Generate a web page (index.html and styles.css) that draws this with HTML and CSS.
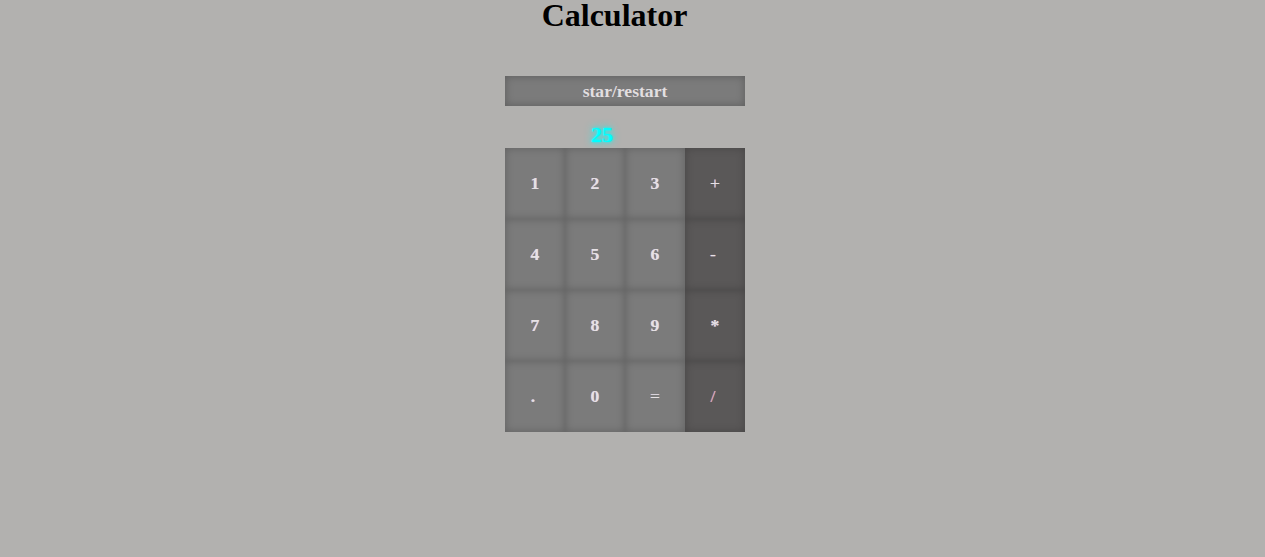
FILE: index.html
```html
<!DOCTYPE html>
<html>
<head>
<meta charset="utf-8">
<link rel="stylesheet" href="styles.css">
</head>
<body>
<div class="page">
  <h1 class="title">Calculator</h1>
  <div class="calc">
    <button class="restart">star/restart</button>
    <div class="display"><span class="value">25</span></div>
    <div class="keys">
      <div class="key">1</div><div class="key">2</div><div class="key">3</div><div class="key op thin">+</div>
      <div class="key">4</div><div class="key">5</div><div class="key">6</div><div class="key op thin nudge">-</div>
      <div class="key">7</div><div class="key">8</div><div class="key">9</div><div class="key op">*</div>
      <div class="key nudge">.</div><div class="key">0</div><div class="key thin">=</div><div class="key op thin slash nudge">/</div>
    </div>
  </div>
</div>
</body>
</html>
```
FILE: styles.css
```css
html, body {
  margin: 0;
  padding: 0;
  background: #b2b1af;
  font-family: "Liberation Serif", "Times New Roman", serif;
}
.page {
  width: 1250px;
}
.title {
  margin: 0;
  padding-right: 21px;
  text-align: center;
  font-size: 32px;
  line-height: 31px;
  color: #000;
}
.calc {
  width: 240px;
  margin: 45px auto 0;
}
.restart {
  display: block;
  width: 240px;
  height: 30px;
  border: none;
  background: #7b7b7b;
  box-shadow: inset 0 0 8px rgba(0,0,0,0.25);
  color: #e2dfe0;
  font-family: "Liberation Serif", "Times New Roman", serif;
  font-weight: bold;
  font-size: 17.6px;
  padding: 0;
  margin: 0;
}
.display {
  height: 42px;
  display: flex;
  align-items: flex-end;
  padding-left: 86px;
  box-sizing: border-box;
  padding-bottom: 2px;
}
.value {
  color: #00ffff;
  font-weight: bold;
  font-size: 22px;
  line-height: 22px;
  text-shadow: 0 0 3px #00ffff, 0 0 8px #00ffff;
}
.keys {
  display: grid;
  grid-template-columns: repeat(4, 60px);
  grid-template-rows: repeat(4, 71px);
}
.key {
  display: flex;
  align-items: center;
  justify-content: center;
  background: #7b7b7b;
  box-shadow: inset 0 0 8px rgba(0,0,0,0.22);
  color: #e6e2e4;
  font-weight: bold;
  font-size: 17.6px;
  text-shadow: 0.5px 0 0 rgba(120,160,255,0.5), -0.5px 0 0 rgba(255,140,120,0.5);
}
.key.op {
  background: #5a5858;
}
.key.thin {
  font-weight: normal;
}
.key.nudge {
  padding-right: 4px;
}
.key.slash {
  color: #e8b4c0;
}
```
